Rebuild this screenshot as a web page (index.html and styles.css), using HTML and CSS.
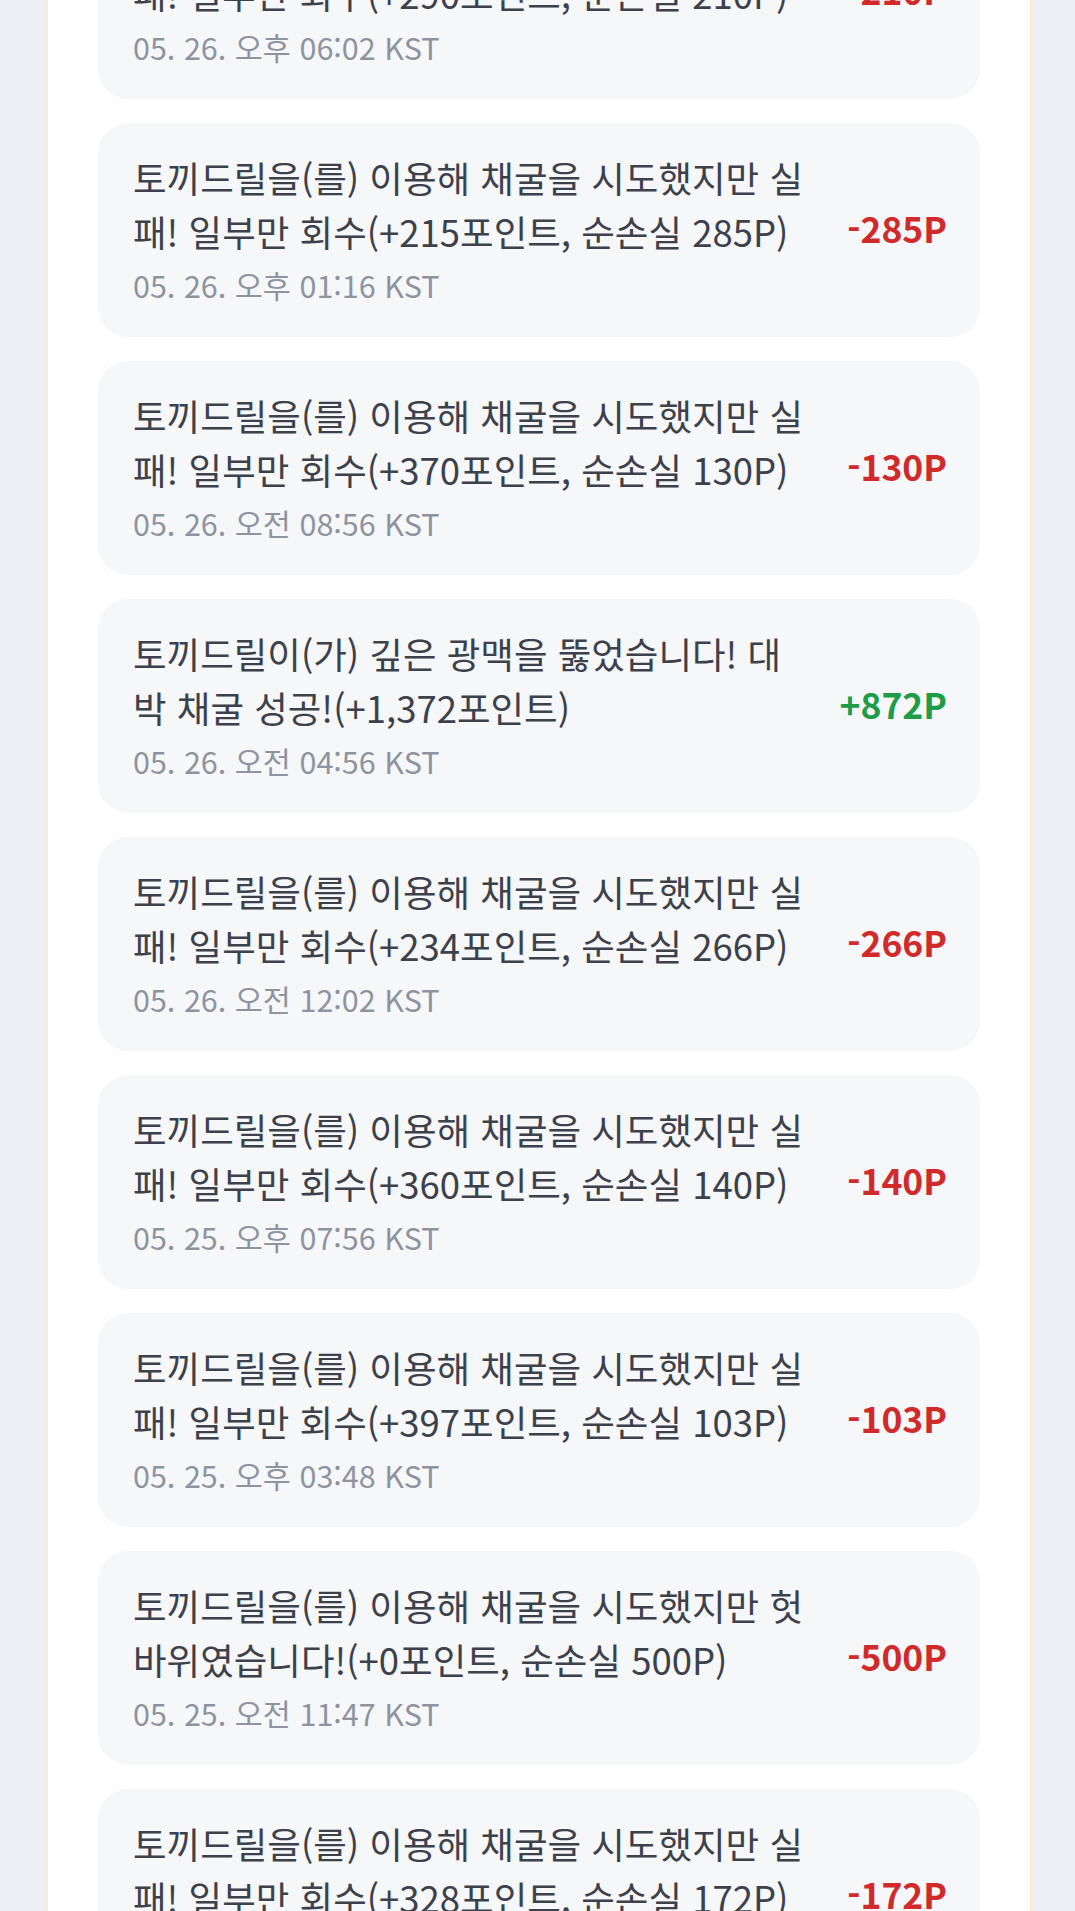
FILE: index.html
```html
<!DOCTYPE html>
<html lang="ko">
<head>
<meta charset="utf-8">
<title>채굴 기록</title>
<link rel="stylesheet" href="styles.css">
</head>
<body>
<div class="panel">
  <ul class="list">
    <li class="card">
      <div class="info">
        <p class="msg">토끼드릴을(를) 이용해 채굴을 시도했지만 실패! 일부만 회수(+290포인트, 순손실 210P)</p>
        <p class="date">05. 26. 오후 06:02 KST</p>
      </div>
      <span class="amount loss">-210P</span>
    </li>
    <li class="card">
      <div class="info">
        <p class="msg">토끼드릴을(를) 이용해 채굴을 시도했지만 실패! 일부만 회수(+215포인트, 순손실 285P)</p>
        <p class="date">05. 26. 오후 01:16 KST</p>
      </div>
      <span class="amount loss">-285P</span>
    </li>
    <li class="card">
      <div class="info">
        <p class="msg">토끼드릴을(를) 이용해 채굴을 시도했지만 실패! 일부만 회수(+370포인트, 순손실 130P)</p>
        <p class="date">05. 26. 오전 08:56 KST</p>
      </div>
      <span class="amount loss">-130P</span>
    </li>
    <li class="card">
      <div class="info">
        <p class="msg">토끼드릴이(가) 깊은 광맥을 뚫었습니다! 대박 채굴 성공!(+1,372포인트)</p>
        <p class="date">05. 26. 오전 04:56 KST</p>
      </div>
      <span class="amount gain">+872P</span>
    </li>
    <li class="card">
      <div class="info">
        <p class="msg">토끼드릴을(를) 이용해 채굴을 시도했지만 실패! 일부만 회수(+234포인트, 순손실 266P)</p>
        <p class="date">05. 26. 오전 12:02 KST</p>
      </div>
      <span class="amount loss">-266P</span>
    </li>
    <li class="card">
      <div class="info">
        <p class="msg">토끼드릴을(를) 이용해 채굴을 시도했지만 실패! 일부만 회수(+360포인트, 순손실 140P)</p>
        <p class="date">05. 25. 오후 07:56 KST</p>
      </div>
      <span class="amount loss">-140P</span>
    </li>
    <li class="card">
      <div class="info">
        <p class="msg">토끼드릴을(를) 이용해 채굴을 시도했지만 실패! 일부만 회수(+397포인트, 순손실 103P)</p>
        <p class="date">05. 25. 오후 03:48 KST</p>
      </div>
      <span class="amount loss">-103P</span>
    </li>
    <li class="card">
      <div class="info">
        <p class="msg">토끼드릴을(를) 이용해 채굴을 시도했지만 헛바위였습니다!(+0포인트, 순손실 500P)</p>
        <p class="date">05. 25. 오전 11:47 KST</p>
      </div>
      <span class="amount loss">-500P</span>
    </li>
    <li class="card">
      <div class="info">
        <p class="msg">토끼드릴을(를) 이용해 채굴을 시도했지만 실패! 일부만 회수(+328포인트, 순손실 172P)</p>
        <p class="date">05. 25. 오전 10:21 KST</p>
      </div>
      <span class="amount loss">-172P</span>
    </li>
  </ul>
</div>
</body>
</html>
```
FILE: styles.css
```css
html, body {
  margin: 0;
  padding: 0;
  background: #eceef3;
  height: 100%;
  overflow: hidden;
}

body {
  font-family: "Noto Sans CJK KR", "Noto Sans", sans-serif;
}

.panel {
  margin-left: 45px;
  width: 989px;
  box-sizing: border-box;
  min-height: 100%;
  background: #ffffff;
  border-left: 3px solid #f6ecd9;
  border-right: 4px solid #f6ecd9;
  padding: 0 50px;
}

.list {
  list-style: none;
  margin: -115px 0 0 0;
  padding: 0;
  display: flex;
  flex-direction: column;
  gap: 24px;
}

.card {
  display: flex;
  align-items: center;
  gap: 40px;
  background: #f6f7f9;
  border-radius: 30px;
  padding: 27px 33px 32px 35px;
  height: 214px;
  box-sizing: border-box;
}

.info {
  flex: 1;
  min-width: 0;
}

.msg {
  margin: 0;
  font-size: 36.5px;
  line-height: 54px;
  color: #3c414c;
}

.date {
  margin: 6px 0 0 0;
  font-size: 30.5px;
  line-height: 40px;
  color: #8e949f;
}

.amount {
  flex: none;
  font-size: 35.5px;
  font-weight: 700;
  line-height: 1;
}

.loss {
  color: #d12a2a;
}

.gain {
  color: #1e9c48;
}
```
